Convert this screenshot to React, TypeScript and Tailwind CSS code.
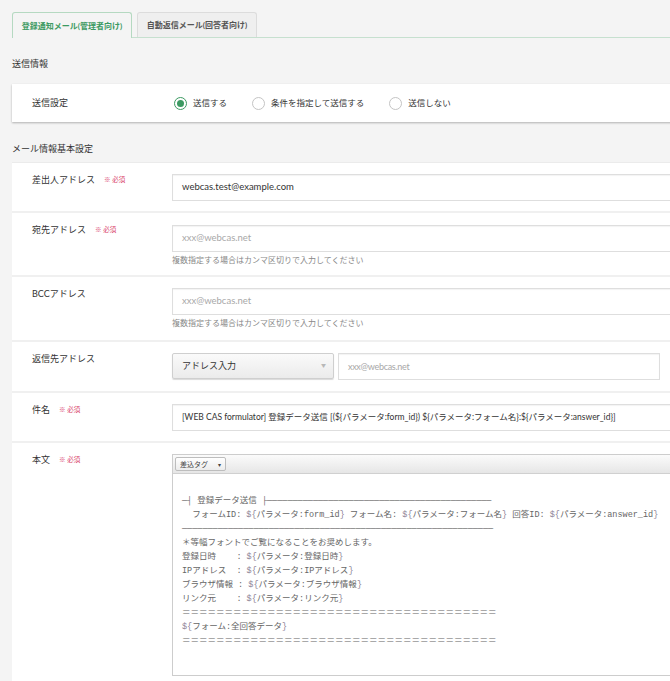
import React from "react";

const UI = "font-['Lato','Noto_Sans_CJK_JP',sans-serif]";

function Req() {
  return <span className="ml-[9px] text-[6.5px] leading-[13px] text-[#d9436b]">※ 必須</span>;
}

function Row({
  label,
  req,
  children,
  last,
}: {
  label: string;
  req?: boolean;
  children: React.ReactNode;
  last?: boolean;
}) {
  return (
    <div className={last ? "flex" : "flex border-b-2 border-[#f0f0f0]"}>
      <div className="w-[160px] shrink-0 pl-[20px] pt-[10px]">
        <div className="flex items-center text-[9px] leading-[13px] text-[#333]">
          <span>{label}</span>
          {req && <Req />}
        </div>
      </div>
      <div className="flex-1 pr-[20px]">{children}</div>
    </div>
  );
}

function Field({ value, placeholder, cls }: { value?: string; placeholder?: string; cls?: string }) {
  return (
    <div
      className={`h-[27px] border border-[#dedede] bg-white shadow-[inset_0_1px_1px_rgba(0,0,0,0.05)] flex items-center pl-[9px] whitespace-nowrap overflow-hidden ${
        cls ?? ""
      } ${value ? "text-[#333]" : "text-[#a8a8a8]"}`}
    >
      {value ?? placeholder}
    </div>
  );
}

function Hint() {
  return (
    <div className="mt-[3px] text-[8px] leading-[11px] text-[#888]">
      複数指定する場合はカンマ区切りで入力してください
    </div>
  );
}

function Radio({ checked, label }: { checked?: boolean; label: string }) {
  return (
    <div className="flex items-center">
      {checked ? (
        <div className="w-[13px] h-[13px] rounded-full border-[1.5px] border-[#3c9a62] bg-white flex items-center justify-center">
          <div className="w-[7px] h-[7px] rounded-full bg-[#3c9a62]" />
        </div>
      ) : (
        <div className="w-[13px] h-[13px] rounded-full border border-[#c4c4c4] bg-white" />
      )}
      <span className="ml-[6px] text-[8.5px] text-[#333]">{label}</span>
    </div>
  );
}

function Line({ t }: { t: string }) {
  const parts = t.split(/(\$\{|\})/);
  return (
    <div className="h-[14px]">
      {parts.map((p, i) =>
        p === "${" || p === "}" ? (
          <span key={i} className="text-[#8d7f95]">
            {p}
          </span>
        ) : (
          <span key={i}>{p}</span>
        )
      )}
    </div>
  );
}

export default function App() {
  const eq = "＝".repeat(37);
  const lines = [
    "",
    "─┤ 登録データ送信 ├" + "─".repeat(44),
    "  フォームID: ${パラメータ:form_id} フォーム名: ${パラメータ:フォーム名} 回答ID: ${パラメータ:answer_id}",
    "─".repeat(61),
    "＊等幅フォントでご覧になることをお奨めします。",
    "登録日時    : ${パラメータ:登録日時}",
    "IPアドレス  : ${パラメータ:IPアドレス}",
    "ブラウザ情報 : ${パラメータ:ブラウザ情報}",
    "リンク元    : ${パラメータ:リンク元}",
    eq,
    "${フォーム:全回答データ}",
    eq,
  ];

  return (
    <div className={`w-[670px] h-[681px] overflow-hidden bg-[#f4f4f4] ${UI}`}>
      <div className="w-[760px]">
        {/* tabs */}
        <div className="ml-[12px] pt-[12px] flex items-end border-b border-[#c6e0cf]">
          <div className="w-[120px] h-[26px] -mb-px border border-b-0 border-[#b5d9c1] rounded-t-[3px] bg-[#f4f4f4] flex items-center justify-center text-[8px] font-bold text-[#3c9a62]">
            登録通知メール(管理者向け)
          </div>
          <div className="ml-[5px] w-[120px] h-[25px] border border-b-0 border-[#dcdcdc] rounded-t-[3px] bg-[#efefef] flex items-center justify-center text-[8px] font-bold text-[#555]">
            自動返信メール(回答者向け)
          </div>
        </div>

        <div className="pl-[12px] pt-[19px] pb-[14px] text-[9px] leading-[13px] text-[#333]">送信情報</div>

        <div className="ml-[12px] h-[38px] bg-white flex items-center shadow-[0_1px_2px_rgba(0,0,0,0.28)]">
          <div className="w-[162px] pl-[20px] text-[9px] text-[#333]">送信設定</div>
          <div className="flex items-center gap-[25px]">
            <Radio checked label="送信する" />
            <Radio label="条件を指定して送信する" />
            <Radio label="送信しない" />
          </div>
        </div>

        <div className="pl-[12px] pt-[20px] pb-[7px] text-[9px] leading-[13px] text-[#333]">メール情報基本設定</div>

        <div className="ml-[12px] bg-white border-t border-[#ebebeb]">
          <Row label="差出人アドレス" req>
            <div className="pt-[11px] pb-[10px]">
              <Field value="webcas.test@example.com" cls="text-[9.5px]" />
            </div>
          </Row>
          <Row label="宛先アドレス" req>
            <div className="pt-[12px] pb-[9px]">
              <Field placeholder="xxx@webcas.net" cls="text-[9.5px] h-[26px]" />
              <Hint />
            </div>
          </Row>
          <Row label="BCCアドレス">
            <div className="pt-[11px] pb-[11px]">
              <Field placeholder="xxx@webcas.net" cls="text-[9.5px] h-[26px]" />
              <Hint />
            </div>
          </Row>
          <Row label="返信先アドレス">
            <div className="pt-[11px] pb-[11px] flex gap-[4px]">
              <div className="w-[162px] h-[26px] border border-[#cfcfcf] rounded-[2px] bg-gradient-to-b from-[#fafafa] to-[#ebebeb] shadow-[0_1px_1px_rgba(0,0,0,0.15)] flex items-center justify-between pl-[9px] pr-[7px] text-[9px] text-[#333]">
                <span>アドレス入力</span>
                <span className="text-[5px] text-[#b8b8b8]">▼</span>
              </div>
              <div className="w-[322px]">
                <Field placeholder="xxx@webcas.net" cls="text-[9px] h-[26px] tracking-[-0.3px]" />
              </div>
            </div>
          </Row>
          <Row label="件名" req>
            <div className="pt-[11px] pb-[10px]">
              <Field
                value="[WEB CAS formulator] 登録データ送信 [(${パラメータ:form_id}) ${パラメータ:フォーム名}:${パラメータ:answer_id}]"
                cls="text-[8.5px] h-[26px]"
              />
            </div>
          </Row>
          <Row label="本文" req last>
            <div className="pt-[11px] pb-[10px]">
              <div className="h-[222px] border border-[#cdcdcd] bg-white flex flex-col">
                <div className="h-[19px] shrink-0 flex items-center pl-[2px] bg-gradient-to-b from-[#fbfbfb] to-[#e6e6e6] border-b border-[#d0d0d0]">
                  <div className="w-[51px] h-[14px] border border-[#bdbdbd] rounded-[2px] bg-gradient-to-b from-white to-[#ececec] flex items-center justify-between px-[4px] text-[7px] text-[#444]">
                    <span>差込タグ</span>
                    <span className="text-[6px]">▾</span>
                  </div>
                </div>
                <div className="pl-[9px] pt-[6px] text-[8.5px] leading-[14px] text-[#666] whitespace-pre font-['Liberation_Mono','DejaVu_Sans_Mono','Noto_Sans_CJK_JP',monospace]">
                  {lines.map((l, i) => (
                    <Line key={i} t={l} />
                  ))}
                </div>
              </div>
            </div>
          </Row>
        </div>
      </div>
    </div>
  );
}
